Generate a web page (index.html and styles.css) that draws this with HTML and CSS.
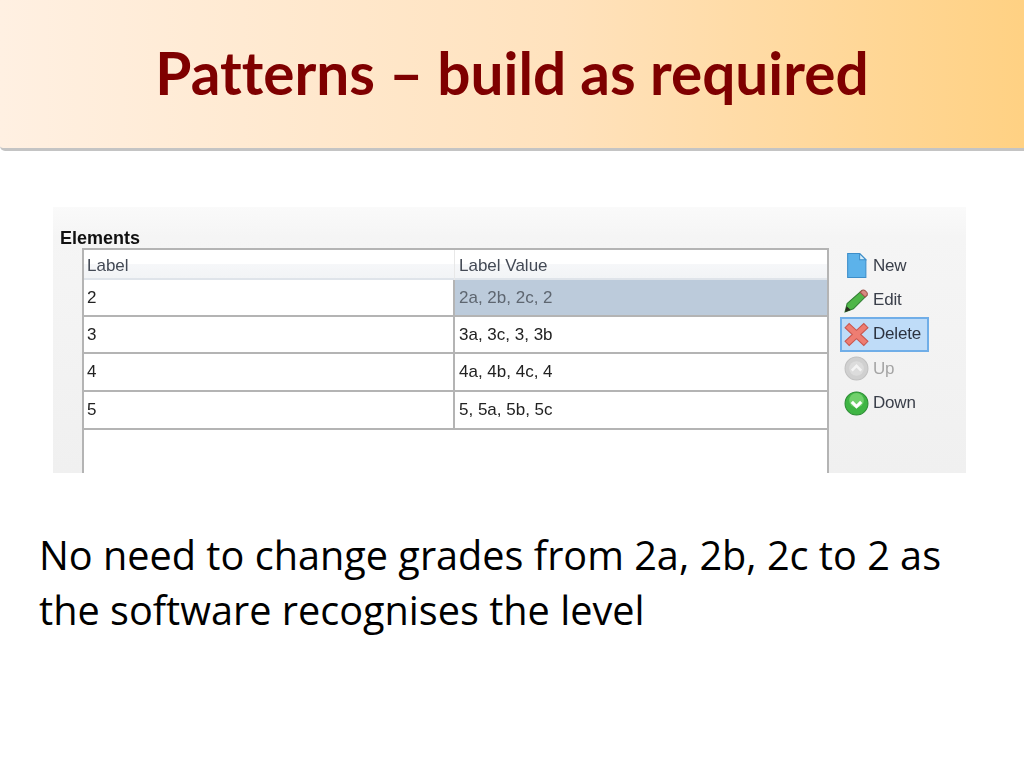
FILE: index.html
```html
<!DOCTYPE html>
<html lang="en">
<head>
<meta charset="utf-8">
<title>Patterns – build as required</title>
<link rel="stylesheet" href="styles.css">
</head>
<body>
<header class="banner"><h1>Patterns – build as required</h1></header>
<section class="panel">
  <div class="panel-title">Elements</div>
  <div class="panel-body">
    <div class="grid">
      <div class="row head"><div class="cell first">Label</div><div class="cell">Label Value</div></div>
      <div class="row r1"><div class="cell first">2</div><div class="cell selected">2a, 2b, 2c, 2</div></div>
      <div class="row r2"><div class="cell first">3</div><div class="cell">3a, 3c, 3, 3b</div></div>
      <div class="row r3"><div class="cell first">4</div><div class="cell">4a, 4b, 4c, 4</div></div>
      <div class="row r4"><div class="cell first">5</div><div class="cell">5, 5a, 5b, 5c</div></div>
    </div>
    <div class="actions">
      <div class="action">
        <svg class="icon" viewBox="0 0 24 24"><path d="M3.500 .5H15L21 6.500V23.500H3.500Z" fill="#5cb2ea" stroke="#3d8ec9"/><path d="M15 .5V6.500H21Z" fill="#d6eefb" stroke="#3d8ec9"/></svg>
        <span>New</span>
      </div>
      <div class="action">
        <svg class="icon" viewBox="0 0 24 24"><path d="M1 23L3 15L17 2.500L22 7L9 20Z" fill="#4fb648" stroke="#2f7d31"/><path d="M15.500 4L17.500 2.200Q19 1.500 20.500 2.800L22 4.300Q23 5.800 22 7L20.200 8.700Z" fill="#d98a80" stroke="#a0524a"/><path d="M1 23L2.500 17.500L6.500 21Z" fill="#2b2b20"/></svg>
        <span>Edit</span>
      </div>
      <div class="action active">
        <svg class="icon" viewBox="0 0 24 24"><path d="M5 1.500L12 8L19 1.500L23 5.500L16 12L23 18.500L19 22.500L12 16L5 22.500L1 18.500L8 12L1 5.500Z" fill="#ee7d72" stroke="#c9564e"/></svg>
        <span>Delete</span>
      </div>
      <div class="action disabled">
        <svg class="icon" viewBox="0 0 24 24"><circle cx="12" cy="12" r="11" fill="#d0d0d0" stroke="#c0c0c0"/><circle cx="12" cy="12" r="7" fill="#dcdcdc"/><path d="M7.500 14L12 9.500L16.500 14" fill="none" stroke="#f4f4f4" stroke-width="2.500"/></svg>
        <span>Up</span>
      </div>
      <div class="action">
        <svg class="icon" viewBox="0 0 24 24"><circle cx="12" cy="12" r="11" fill="#3fb544" stroke="#2b8c33"/><circle cx="12" cy="9" r="7" fill="#71d06c"/><path d="M7.500 10.500L12 15L16.500 10.500" fill="none" stroke="#fff" stroke-width="3"/></svg>
        <span>Down</span>
      </div>
    </div>
  </div>
</section>
<p class="note">No need to change grades from 2a, 2b, 2c to 2 as the software recognises the level</p>
</body>
</html>
```

FILE: styles.css
```css
* { box-sizing: border-box; }
html, body { margin: 0; height: 100%; background: #fff; }
body { width: 1024px; height: 768px; overflow: hidden; }
.banner {
  height: 151px;
  padding-top: 42px;
  background: linear-gradient(90deg, #fff0e2 0%, #ffe2bd 55%, #ffd183 100%);
  border-bottom: 3px solid #c4c4c4;
  border-radius: 0 0 0 5px;
}
.banner h1 {
  margin: 0;
  font: 700 58.500px/60px Lato, "Liberation Sans", sans-serif;
  font-variant-ligatures: none;
  color: #7f0000;
  text-align: center;
}
.panel {
  margin: 56px 58px 0 53px;
  height: 266px;
  padding: 22px 0 0 7px;
  background: linear-gradient(180deg, #fafafa 0, #f5f5f5 30px, #f0f0f0 100%);
  font-family: "Liberation Sans", sans-serif;
  color: #222;
  filter: blur(.45px);
}
.panel-title { height: 19px; font: 700 18px/19px "Liberation Sans", sans-serif; color: #111; }
.panel-body { display: flex; height: 225px; margin-left: 22px; }
.grid {
  width: 747px;
  background: #fff;
  border: 2px solid #b4b4b4;
  border-bottom: 0;
  font-size: 17px;
}
.row { display: grid; grid-template-columns: 371px 1fr; border-bottom: 2px solid #b4b4b4; }
.cell { padding: 1px 0 0 4px; line-height: 34px; }
.first { padding-left: 3px; border-right: 2px solid #b4b4b4; }
.head { height: 30px; background: linear-gradient(180deg, #fff 0, #fff 50%, #f6f7f9 50%, #f2f4f6 100%); border-bottom: 2px solid #dfe4ea; }
.head .cell { padding-top: 0; line-height: 31px; color: #444a55; border: 0; }
.head .first { border-right: 1px solid #e8e8e8; }
.r1 { height: 37px; }
.r2 { height: 37px; }
.r3 { height: 38px; }
.r4 { height: 38px; }
.selected { background: #bccbdb; color: #5e6670; }
.actions { display: flex; flex-direction: column; padding: .5px 0 0 11px; }
.action {
  display: flex;
  align-items: center;
  width: 89px;
  height: 34.400px;
  gap: 4px;
  padding-left: 3px;
  font-size: 17px;
  letter-spacing: -.2px;
  color: #3a3f4a;
  border: 1px solid transparent;
}
.action.active { background: #bfdcf8; border: 2px solid #70aee8; padding-left: 2px; color: #2c3340; }
.action.disabled { color: #a5a5a5; }
.icon { width: 25px; height: 25px; flex: none; }
.note {
  margin: 55px 0 0 39px;
  width: 960px;
  font: 400 39.650px/55px "Open Sans", sans-serif;
  color: #000;
}
```
